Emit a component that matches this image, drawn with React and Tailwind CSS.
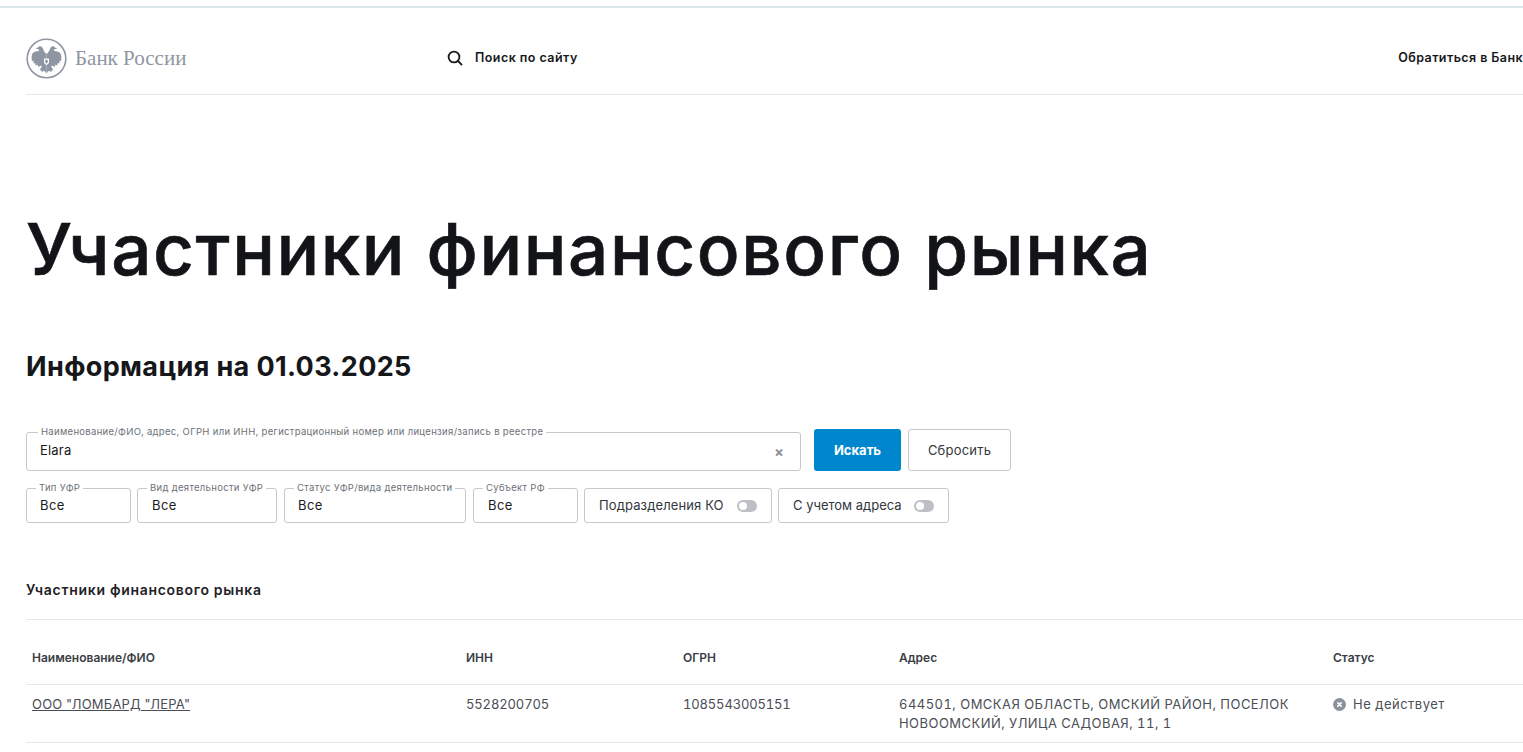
import React from "react";

const half = "M19.6 15.5L17.6 12.4C17.2 11 16.6 9.3 15.2 8.6C13.9 8 12.7 8.5 12 9.6L9.6 10.6L12.4 11.2L13.4 13C11 12.6 7.8 13.4 6.4 15.6C5.6 17.4 5.4 20.6 6 23.2L7.4 22.6L7.6 25.6L9.2 25L9.8 27.6L11.6 26.8L12.6 29L14.8 27.6L15.8 28.4L13.6 32.2L15.6 32.6L15.8 34.4L17.6 32.8L19 33.4L20.5 35.6L20.5 15.5Z";

function Logo() {
  return (
    <svg width="41" height="41" viewBox="0 0 41 41" className="shrink-0">
      <circle cx="20.5" cy="20.5" r="19.3" fill="none" stroke="#8f96a3" strokeWidth="1.6" />
      <path fill="#8f96a3" d={half} />
      <path fill="#8f96a3" d={half} transform="translate(41 0) scale(-1 1)" />
      <path fill="#ffffff" d="M18 20.5h5v4.6l-2.5 2.2-2.5-2.2z" />
      <path fill="#8f96a3" d="M19.3 21.8h2.4v2.7l-1.2 1-1.2-1z" />
    </svg>
  );
}

function Field({ label, value, className, valueClass }) {
  return (
    <div className={"relative h-[35px] rounded-[3px] border border-[#c6c8cc] bg-white " + className}>
      <span className="absolute -top-[7px] left-[9px] bg-white px-[3px] text-[9.5px] leading-[12px] tracking-[0.31px] text-[#6d7178]">{label}</span>
      <div className={"flex h-full items-center pt-[1px] text-[13px] tracking-[0.4px] text-[#1a1c1f] " + valueClass}>{value}</div>
    </div>
  );
}

function Toggle({ label, className }) {
  return (
    <div className={"flex h-[35px] items-center justify-between rounded-[3px] border border-[#c6c8cc] bg-white px-[14px] text-[13px] text-[#33373d] " + className}>
      <span>{label}</span>
      <span className="flex h-[12px] w-[20px] items-center rounded-full bg-[#bcbfc5] pl-[2px]">
        <span className="h-[8px] w-[8px] rounded-full bg-white" />
      </span>
    </div>
  );
}

export default function App() {
  return (
    <div className="h-[752px] w-[1523px] overflow-hidden bg-white font-['Inter','Liberation_Sans',sans-serif] text-[#15171a]">
      <div className="h-[8px] border-b-2 border-[#dde6ea]" />
      <div className="pl-[26px]">
        <header className="flex h-[87px] items-center border-b border-[#e6e7e9] pt-[14px]">
          <div className="flex w-[421px] items-center gap-[8px]">
            <Logo />
            <span className="font-['Liberation_Serif',serif] text-[21px] leading-none text-[#8f96a3]">Банк России</span>
          </div>
          <div className="flex items-center gap-[12px]">
            <svg width="16" height="16" viewBox="0 0 16 16" fill="none" stroke="#15171a" strokeWidth="1.8">
              <circle cx="7" cy="7" r="5.4" />
              <path d="M11 11l3.6 3.6" strokeLinecap="round" />
            </svg>
            <span className="text-[12.5px] font-semibold tracking-[0.45px]">Поиск по сайту</span>
          </div>
          <span className="ml-auto whitespace-nowrap text-[12.5px] font-semibold tracking-[0.42px]">Обратиться в Банк</span>
        </header>

        <h1 className="mt-[110px] whitespace-nowrap text-[71px] leading-[88px] font-medium tracking-[1.58px] text-[#121417] [-webkit-text-stroke:0.6px_#121417]">Участники финансового рынка</h1>

        <h2 className="mt-[56px] text-[27px] leading-[36px] font-bold tracking-[0.37px]">Информация на 01.03.2025</h2>

        <div className="mt-[44px] flex h-[42px] items-stretch">
          <div className="relative mt-[3px] flex h-[39px] w-[775px] items-center justify-between rounded-[3px] border border-[#c6c8cc] pr-[16px] pl-[13px] text-[13px] tracking-[0.2px]">
            <span className="absolute -top-[7px] left-[11px] bg-white px-[3px] text-[9.5px] leading-[12px] tracking-[0.31px] text-[#6d7178]">Наименование/ФИО, адрес, ОГРН или ИНН, регистрационный номер или лицензия/запись в реестре</span>
            <span className="-mt-[1px]">Elara</span>
            <span className="text-[14px] leading-none font-bold text-[#8b8f96]">×</span>
          </div>
          <button className="ml-[13px] w-[87px] rounded-[3px] bg-[#0086cd] pt-[1px] text-[13px] font-bold text-white">Искать</button>
          <button className="ml-[7px] w-[103px] rounded-[3px] border border-[#c6c8cc] pt-[1px] text-[13px] tracking-[0.2px] text-[#33373d]">Сбросить</button>
        </div>

        <div className="mt-[17px] flex gap-[6px]">
          <Field label="Тип УФР" value="Все" className="w-[105px]" valueClass="pl-[13px]" />
          <Field label="Вид деятельности УФР" value="Все" className="w-[140px]" valueClass="pl-[14px]" />
          <Field label="Статус УФР/вида деятельности" value="Все" className="ml-[1px] w-[182px]" valueClass="pl-[13px]" />
          <Field label="Субъект РФ" value="Все" className="ml-[1px] w-[105px]" valueClass="pl-[14px]" />
          <Toggle label={<span className="tracking-[0.12px]">Подразделения КО</span>} className="w-[188px]" />
          <Toggle label="С учетом адреса" className="w-[171px]" />
        </div>

        <div className="mt-[58px] text-[14px] leading-[18px] font-semibold tracking-[0.7px] text-[#1f2227]">Участники финансового рынка</div>

        <div className="mt-[20px] border-t border-[#e6e7e9]">
          <div className="flex h-[65px] items-center border-b border-[#e6e7e9] pt-[11px] pl-[6px] text-[12px] font-semibold text-[#3a3e44]">
            <div className="w-[434px]">Наименование/ФИО</div>
            <div className="w-[217px]">ИНН</div>
            <div className="w-[216px]">ОГРН</div>
            <div className="w-[434px]">Адрес</div>
            <div>Статус</div>
          </div>
          <div className="flex h-[58px] border-b border-[#e6e7e9] pt-[10px] pl-[6px] text-[13px] leading-[19px] text-[#4a4e55] tabular-nums">
            <div className="w-[434px] tracking-[0.2px] underline">ООО "ЛОМБАРД "ЛЕРА"</div>
            <div className="w-[217px] tracking-[-0.12px]">5528200705</div>
            <div className="w-[216px] tracking-[-0.15px]">1085543005151</div>
            <div className="w-[434px] tracking-[0.46px]">644501, ОМСКАЯ ОБЛАСТЬ, ОМСКИЙ РАЙОН, ПОСЕЛОК<br />НОВООМСКИЙ, УЛИЦА САДОВАЯ, 11, 1</div>
            <div className="flex h-[19px] items-center gap-[7px] tracking-[0.5px]">
              <svg width="13" height="13" viewBox="0 0 13 13">
                <circle cx="6.5" cy="6.5" r="6.5" fill="#8b929e" />
                <path d="M4.4 4.4l4.2 4.2M8.6 4.4l-4.2 4.2" stroke="#fff" strokeWidth="1.5" />
              </svg>
              <span>Не действует</span>
            </div>
          </div>
        </div>
      </div>
    </div>
  );
}
